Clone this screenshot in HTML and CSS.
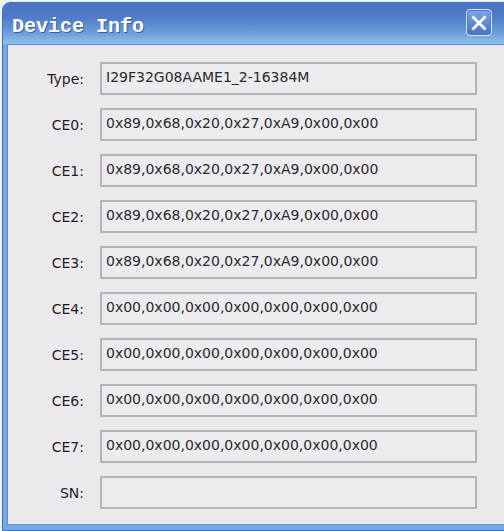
FILE: index.html
```html
<!DOCTYPE html>
<html lang="en">
<head>
    <meta charset="UTF-8">
    <title>Device Info</title>
    <link rel="stylesheet" href="styles.css">
</head>
<body>
    <div class="window">
        <div class="titlebar">
            <span class="title">Device Info</span>
            <button class="close-btn" aria-label="Close">
                <svg width="16" height="16" viewBox="0 0 16 16">
                    <path d="M2.5 2.5 L13.5 13.5 M13.5 2.5 L2.5 13.5" stroke="#fff" stroke-width="2.8" stroke-linecap="square"/>
                </svg>
            </button>
        </div>
        <div class="client">
            <div class="row"><span class="label">Type:</span><div class="field">I29F32G08AAME1_2-16384M</div></div>
            <div class="row"><span class="label">CE0:</span><div class="field">0x89,0x68,0x20,0x27,0xA9,0x00,0x00</div></div>
            <div class="row"><span class="label">CE1:</span><div class="field">0x89,0x68,0x20,0x27,0xA9,0x00,0x00</div></div>
            <div class="row"><span class="label">CE2:</span><div class="field">0x89,0x68,0x20,0x27,0xA9,0x00,0x00</div></div>
            <div class="row"><span class="label">CE3:</span><div class="field">0x89,0x68,0x20,0x27,0xA9,0x00,0x00</div></div>
            <div class="row"><span class="label">CE4:</span><div class="field">0x00,0x00,0x00,0x00,0x00,0x00,0x00</div></div>
            <div class="row"><span class="label">CE5:</span><div class="field">0x00,0x00,0x00,0x00,0x00,0x00,0x00</div></div>
            <div class="row"><span class="label">CE6:</span><div class="field">0x00,0x00,0x00,0x00,0x00,0x00,0x00</div></div>
            <div class="row"><span class="label">CE7:</span><div class="field">0x00,0x00,0x00,0x00,0x00,0x00,0x00</div></div>
            <div class="row"><span class="label">SN:</span><div class="field"></div></div>
        </div>
    </div>
</body>
</html>
```

FILE: styles.css
```css
html, body {
    margin: 0;
    height: 100%;
    overflow: hidden;
}
body {
    background-color: #f2f2f2;
    padding: 2px 0 0 2px;
    font-family: "DejaVu Sans", sans-serif;
}
.window {
    width: 510px;
    height: 529px;
    background-color: #74a9e8;
    border-radius: 8px 8px 0 0;
    border: 1px solid #3d6fc4;
    box-sizing: border-box;
    display: flex;
    flex-direction: column;
}
.titlebar {
    height: 41px;
    flex-shrink: 0;
    border-radius: 7px 7px 0 0;
    background: linear-gradient(to bottom, #4b74c2 0%, #4f7bc8 35%, #6a9ad8 70%, #90c0ec 100%);
    display: flex;
    align-items: center;
    padding: 0 0 0 9px;
    position: relative;
}
.title {
    font-family: "Liberation Mono", monospace;
    font-weight: bold;
    font-size: 20px;
    color: #fff;
    text-shadow: 1px 1px 0 #3a5f9e;
    margin-top: 5px;
}
.close-btn {
    position: absolute;
    left: 463px;
    top: 6px;
    width: 26px;
    height: 27px;
    padding: 0;
    border: 1px solid #dbe8f8;
    border-radius: 4px;
    background: linear-gradient(to bottom, #7aa8e6, #4572c8);
    box-shadow: inset 0 0 0 1px #4a78c8;
    display: flex;
    align-items: center;
    justify-content: center;
}
.client {
    flex: 1;
    margin: 0 5px 5px 4px;
    background-color: #ebe9ed;
    border: 1px solid #5f8fd0;
    padding: 17px 0 0 0;
    display: flex;
    flex-direction: column;
    gap: 13px;
}
.row {
    display: flex;
    align-items: center;
    gap: 16px;
}
.label {
    width: 76px;
    text-align: right;
    font-size: 14px;
    color: #1e1e1e;
}
.field {
    width: 369px;
    height: 29px;
    border: 2px solid #b4b3b6;
    background-color: #ecebef;
    font-size: 14px;
    color: #2a2a2a;
    line-height: 27px;
    padding-left: 4px;
    box-sizing: content-box;
    white-space: nowrap;
    overflow: hidden;
}
```
